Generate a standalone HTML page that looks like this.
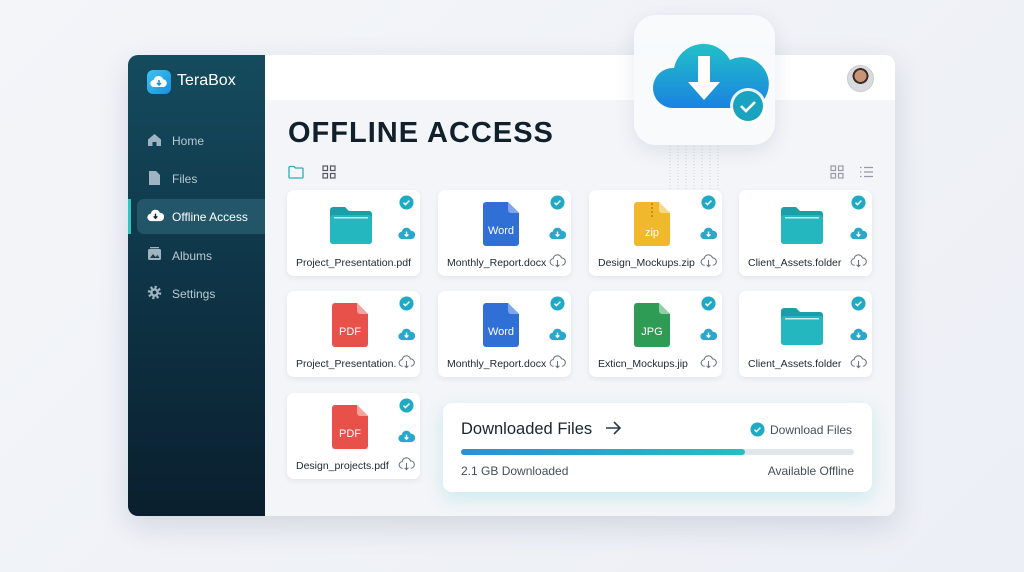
<!DOCTYPE html>
<html><head><meta charset="utf-8"><style>
*{box-sizing:border-box;margin:0;padding:0}
body{width:1024px;height:572px;overflow:hidden;background:linear-gradient(135deg,#f3f5f9,#eceff5);font-family:"Liberation Sans",sans-serif;position:relative}
.win{position:absolute;left:128px;top:55px;width:767px;height:461px;border-radius:10px;background:#f3f5f8;box-shadow:0 10px 30px rgba(40,60,90,.15);overflow:hidden}
.side{position:absolute;left:0;top:0;width:137px;height:461px;background:linear-gradient(180deg,#154b5e,#0e3446 50%,#0a1f2e)}
.hdr{position:absolute;left:137px;top:0;right:0;height:45px;background:#fff}
.logo{position:absolute;left:19px;top:15px;width:24px;height:24px;border-radius:6px;background:linear-gradient(135deg,#3cc4f0,#1b8ee0)}
.brand{position:absolute;left:49px;top:17px;color:#fff;font-size:16px}
.nav{position:absolute;left:44px;color:#b8c9d2;font-size:12px}
.ni{position:absolute;left:19px}
.act{position:absolute;left:9px;top:144px;width:128px;height:35px;background:rgba(80,150,170,.3);border-radius:7px 0 0 7px}
.bar{position:absolute;left:0;top:144px;width:3px;height:35px;background:#35c3c0}
.title{position:absolute;left:160px;top:62px;font-size:29px;font-weight:bold;color:#12202c;letter-spacing:1px}
.card{position:absolute;width:133px;height:86px;background:#fff;border-radius:7px;box-shadow:0 2px 6px rgba(30,60,90,.08)}
.card .nm{position:absolute;left:9px;top:67px;font-size:10.5px;color:#1d2630;white-space:nowrap}
.card svg{position:absolute}
.panel{position:absolute;left:315px;top:348px;width:429px;height:89px;background:#fff;border-radius:9px;box-shadow:0 6px 18px rgba(40,190,200,.2)}
</style></head><body>
<svg width="0" height="0" style="position:absolute"><defs>
<symbol id="chk" viewBox="0 0 16 16"><circle cx="8" cy="8" r="7.5" fill="#1fa9c2"/><path d="M4.8 8.2l2.1 2 4.2-4.2" stroke="#fff" stroke-width="1.6" fill="none"/></symbol>
<symbol id="cd" viewBox="0 0 18 14"><path d="M4.5 13a4 4 0 0 1-.5-8 5 5 0 0 1 9.6-1 4.4 4.4 0 0 1 .4 9z" fill="#2aa8cc"/><path d="M9 5v5M7 8l2 2 2-2" stroke="#fff" stroke-width="1.5" fill="none"/></symbol>
<symbol id="co" viewBox="0 0 18 14"><path d="M5 11.5a3.5 3.5 0 0 1-.6-7 4.5 4.5 0 0 1 8.8-.8 3.9 3.9 0 0 1 .4 7.8" stroke="#6b7580" stroke-width="1.1" fill="none"/><path d="M9 6v7M7 11l2 2 2-2" stroke="#6b7580" stroke-width="1.1" fill="none"/></symbol>
<symbol id="fold" viewBox="0 0 46 38"><path d="M2 4a3 3 0 0 1 3-3h12l4 4h20a3 3 0 0 1 3 3v27a3 3 0 0 1-3 3H5a3 3 0 0 1-3-3z" fill="#1a9fa8"/><rect x="2" y="9" width="42" height="29" rx="3" fill="#24b7bf"/><rect x="6" y="11" width="34" height="1.5" fill="#c6eef0"/></symbol>
</defs></svg>

<div class="win">
 <div class="side">
  <div class="logo"><svg width="24" height="24" viewBox="0 0 24 24"><path d="M7 17a3.5 3.5 0 0 1-.4-7 5 5 0 0 1 9.6-.8A4 4 0 0 1 17 17z" fill="#fff"/><path d="M12 10v5M10 13l2 2 2-2" stroke="#1b8ee0" stroke-width="1.5" fill="none"/></svg></div>
  <div class="brand">TeraBox</div>
  <div class="act"></div><div class="bar"></div>
  <svg class="ni" style="top:78px" width="15" height="14" viewBox="0 0 15 14"><path d="M7.5 1L1 6.5V13h4.5V9h4v4H14V6.5z" fill="#9fb4c0"/></svg>
  <div class="nav" style="top:79px">Home</div>
  <svg class="ni" style="top:115px;left:20px" width="13" height="16" viewBox="0 0 13 16"><path d="M1 1h7l4 4v10H1z" fill="#9fb4c0"/></svg>
  <div class="nav" style="top:117px">Files</div>
  <svg class="ni" style="top:154px" width="17" height="13" viewBox="0 0 18 14"><path d="M4.5 13a4 4 0 0 1-.5-8 5 5 0 0 1 9.6-1 4.4 4.4 0 0 1 .4 9z" fill="#fff"/><path d="M9 5v5M7 8l2 2 2-2" stroke="#123" stroke-width="1.5" fill="none"/></svg>
  <div class="nav" style="top:155px;color:#fff">Offline Access</div>
  <svg class="ni" style="top:192px" width="15" height="14" viewBox="0 0 15 14"><rect x="1" y="2" width="13" height="11" rx="1.5" fill="#9fb4c0"/><path d="M3 11l3-4 2.5 3 2-2 2 3z" fill="#173d4e"/><rect x="3" y="0" width="9" height="1.3" fill="#9fb4c0"/></svg>
  <div class="nav" style="top:194px">Albums</div>
  <svg class="ni" style="top:230px" width="15" height="15" viewBox="0 0 16 16"><circle cx="8" cy="8" r="5.5" fill="none" stroke="#9fb4c0" stroke-width="3.4" stroke-dasharray="2.2 2.1"/><circle cx="8" cy="8" r="4.6" fill="#9fb4c0"/><circle cx="8" cy="8" r="2" fill="#0f3142"/></svg>
  <div class="nav" style="top:232px">Settings</div>
 </div>
 <div class="hdr"></div>
 <div style="position:absolute;left:719px;top:10px;width:27px;height:27px;border-radius:50%;background:radial-gradient(circle at 50% 40%,#c89478 0 30%,#3a2a22 31% 40%,#d7dbe0 41%);border:1px solid #ccc"></div>
 <div class="title">OFFLINE ACCESS</div>
 <svg style="position:absolute;left:160px;top:110px" width="16" height="14" viewBox="0 0 16 14"><path d="M1 2.5a1 1 0 0 1 1-1h4l1.5 1.5H14a1 1 0 0 1 1 1V12a1 1 0 0 1-1 1H2a1 1 0 0 1-1-1z" fill="none" stroke="#28aebc" stroke-width="1.3"/></svg>
 <svg style="position:absolute;left:194px;top:110px" width="14" height="14" viewBox="0 0 14 14" fill="none" stroke="#556" stroke-width="1.2"><rect x="1" y="1" width="4.5" height="4.5"/><rect x="8.5" y="1" width="4.5" height="4.5"/><rect x="1" y="8.5" width="4.5" height="4.5"/><rect x="8.5" y="8.5" width="4.5" height="4.5"/></svg>
 <svg style="position:absolute;left:702px;top:110px" width="14" height="14" viewBox="0 0 14 14" fill="none" stroke="#99a" stroke-width="1.2"><rect x="1" y="1" width="4.5" height="4.5"/><rect x="8.5" y="1" width="4.5" height="4.5"/><rect x="1" y="8.5" width="4.5" height="4.5"/><rect x="8.5" y="8.5" width="4.5" height="4.5"/></svg>
 <svg style="position:absolute;left:731px;top:111px" width="15" height="12" viewBox="0 0 15 12" stroke="#99a" stroke-width="1.3"><path d="M1 1.5h1.5M5 1.5h9M1 6h1.5M5 6h9M1 10.5h1.5M5 10.5h9"/></svg>
</div>

<!-- cards -->
<div class="card" style="left:287px;top:190px"><svg style="left:41px;top:16px" width="46" height="38"><use href="#fold"/></svg><svg style="left:112px;top:5px" width="15" height="15"><use href="#chk"/></svg><svg style="left:111px;top:37px" width="17" height="13"><use href="#cd"/></svg><div class="nm">Project_Presentation.pdf</div></div>
<div class="card" style="left:438px;top:190px"><svg style="left:45px;top:12px" width="36" height="44" viewBox="0 0 36 44"><path d="M3 0h22l11 11v30a3 3 0 0 1-3 3H3a3 3 0 0 1-3-3V3a3 3 0 0 1 3-3z" fill="#2f6fd6"/><path d="M25 0v8a3 3 0 0 0 3 3h8z" fill="#7fa6ea"/><text x="18" y="32" font-size="11" fill="#fff" text-anchor="middle" font-family="Liberation Sans">Word</text></svg><svg style="left:112px;top:5px" width="15" height="15"><use href="#chk"/></svg><svg style="left:111px;top:37px" width="17" height="13"><use href="#cd"/></svg><div class="nm">Monthly_Report.docx</div><svg style="left:111px;top:64px" width="17" height="14"><use href="#co"/></svg></div>
<div class="card" style="left:589px;top:190px"><svg style="left:45px;top:12px" width="36" height="44" viewBox="0 0 36 44"><path d="M3 0h22l11 11v30a3 3 0 0 1-3 3H3a3 3 0 0 1-3-3V3a3 3 0 0 1 3-3z" fill="#f0b92c"/><path d="M25 0v8a3 3 0 0 0 3 3h8z" fill="#f7d98a"/><path d="M18 1v16" stroke="#c98f10" stroke-width="2" stroke-dasharray="2 2"/><text x="18" y="34" font-size="11" fill="#fff" text-anchor="middle" font-family="Liberation Sans">zip</text></svg><svg style="left:112px;top:5px" width="15" height="15"><use href="#chk"/></svg><svg style="left:111px;top:37px" width="17" height="13"><use href="#cd"/></svg><div class="nm">Design_Mockups.zip</div><svg style="left:111px;top:64px" width="17" height="14"><use href="#co"/></svg></div>
<div class="card" style="left:739px;top:190px"><svg style="left:40px;top:16px" width="46" height="38"><use href="#fold"/></svg><svg style="left:112px;top:5px" width="15" height="15"><use href="#chk"/></svg><svg style="left:111px;top:37px" width="17" height="13"><use href="#cd"/></svg><div class="nm">Client_Assets.folder</div><svg style="left:111px;top:64px" width="17" height="14"><use href="#co"/></svg></div>

<div class="card" style="left:287px;top:291px"><svg style="left:45px;top:12px" width="36" height="44" viewBox="0 0 36 44"><path d="M3 0h22l11 11v30a3 3 0 0 1-3 3H3a3 3 0 0 1-3-3V3a3 3 0 0 1 3-3z" fill="#e8514a"/><path d="M25 0v8a3 3 0 0 0 3 3h8z" fill="#f5a39c"/><text x="18" y="32" font-size="11" fill="#fff" text-anchor="middle" font-family="Liberation Sans">PDF</text></svg><svg style="left:112px;top:5px" width="15" height="15"><use href="#chk"/></svg><svg style="left:111px;top:37px" width="17" height="13"><use href="#cd"/></svg><div class="nm">Project_Presentation.</div><svg style="left:111px;top:64px" width="17" height="14"><use href="#co"/></svg></div>
<div class="card" style="left:438px;top:291px"><svg style="left:45px;top:12px" width="36" height="44" viewBox="0 0 36 44"><path d="M3 0h22l11 11v30a3 3 0 0 1-3 3H3a3 3 0 0 1-3-3V3a3 3 0 0 1 3-3z" fill="#2f6fd6"/><path d="M25 0v8a3 3 0 0 0 3 3h8z" fill="#7fa6ea"/><text x="18" y="32" font-size="11" fill="#fff" text-anchor="middle" font-family="Liberation Sans">Word</text></svg><svg style="left:112px;top:5px" width="15" height="15"><use href="#chk"/></svg><svg style="left:111px;top:37px" width="17" height="13"><use href="#cd"/></svg><div class="nm">Monthly_Report.docx</div><svg style="left:111px;top:64px" width="17" height="14"><use href="#co"/></svg></div>
<div class="card" style="left:589px;top:291px"><svg style="left:45px;top:12px" width="36" height="44" viewBox="0 0 36 44"><path d="M3 0h22l11 11v30a3 3 0 0 1-3 3H3a3 3 0 0 1-3-3V3a3 3 0 0 1 3-3z" fill="#2e9c55"/><path d="M25 0v8a3 3 0 0 0 3 3h8z" fill="#8fd1a6"/><text x="18" y="32" font-size="11" fill="#fff" text-anchor="middle" font-family="Liberation Sans">JPG</text></svg><svg style="left:112px;top:5px" width="15" height="15"><use href="#chk"/></svg><svg style="left:111px;top:37px" width="17" height="13"><use href="#cd"/></svg><div class="nm">Exticn_Mockups.jip</div><svg style="left:111px;top:64px" width="17" height="14"><use href="#co"/></svg></div>
<div class="card" style="left:739px;top:291px"><svg style="left:40px;top:16px" width="46" height="38"><use href="#fold"/></svg><svg style="left:112px;top:5px" width="15" height="15"><use href="#chk"/></svg><svg style="left:111px;top:37px" width="17" height="13"><use href="#cd"/></svg><div class="nm">Client_Assets.folder</div><svg style="left:111px;top:64px" width="17" height="14"><use href="#co"/></svg></div>

<div class="card" style="left:287px;top:393px"><svg style="left:45px;top:12px" width="36" height="44" viewBox="0 0 36 44"><path d="M3 0h22l11 11v30a3 3 0 0 1-3 3H3a3 3 0 0 1-3-3V3a3 3 0 0 1 3-3z" fill="#e8514a"/><path d="M25 0v8a3 3 0 0 0 3 3h8z" fill="#f5a39c"/><text x="18" y="32" font-size="11" fill="#fff" text-anchor="middle" font-family="Liberation Sans">PDF</text></svg><svg style="left:112px;top:5px" width="15" height="15"><use href="#chk"/></svg><svg style="left:111px;top:37px" width="17" height="13"><use href="#cd"/></svg><div class="nm">Design_projects.pdf</div><svg style="left:111px;top:64px" width="17" height="14"><use href="#co"/></svg></div>

<div class="panel" style="left:443px;top:403px">
 <div style="position:absolute;left:18px;top:17px;font-size:16.5px;color:#1a2430">Downloaded Files</div>
 <svg style="position:absolute;left:162px;top:18px" width="17" height="14" viewBox="0 0 17 14" stroke="#2a3a48" stroke-width="1.6" fill="none"><path d="M1 7h14M9 1l6 6-6 6"/></svg>
 <svg style="position:absolute;left:307px;top:19px" width="15" height="15"><use href="#chk"/></svg>
 <div style="position:absolute;left:327px;top:20px;font-size:12px;color:#444e58">Download Files</div>
 <div style="position:absolute;left:18px;top:46px;width:393px;height:6px;border-radius:3px;background:#e1e6ec"></div>
 <div style="position:absolute;left:18px;top:46px;width:284px;height:6px;border-radius:3px;background:linear-gradient(90deg,#2a8fd8,#24c0c0)"></div>
 <div style="position:absolute;left:18px;top:61px;font-size:12px;color:#444e58">2.1 GB Downloaded</div>
 <div style="position:absolute;right:18px;top:61px;font-size:12px;color:#444e58">Available Offline</div>
</div>

<!-- floating cloud tile -->
<svg style="position:absolute;left:650px;top:140px" width="90" height="50"><g stroke="#c9d3dc" stroke-width="1" stroke-dasharray="1 2"><path d="M20 0v50M28 0v50M36 0v50M44 0v50M52 0v50M60 0v50M68 0v50"/></g></svg>
<div style="position:absolute;left:634px;top:15px;width:141px;height:130px;border-radius:22px;background:rgba(248,250,252,.95);box-shadow:0 6px 20px rgba(60,90,130,.12)"></div>
<svg style="position:absolute;left:652px;top:36px" width="120" height="95" viewBox="0 0 120 95">
 <defs><linearGradient id="cg" x1="0" y1="0" x2="0" y2="1"><stop offset="0" stop-color="#22c0c8"/><stop offset="1" stop-color="#1a82e0"/></linearGradient></defs>
 <path d="M20 72a20 20 0 0 1 2-40 30 30 0 0 1 56-8 24 24 0 0 1 24 48z" fill="url(#cg)"/>
 <path d="M46 20v26h-10l16 18 16-18h-10V20z" fill="#fff"/>
 <circle cx="96" cy="70" r="18" fill="#fff" opacity=".9"/>
 <circle cx="96" cy="70" r="15" fill="#1aa3bf"/>
 <path d="M89 70l5 5 9-9" stroke="#fff" stroke-width="2.6" fill="none"/>
</svg>
</body></html>
